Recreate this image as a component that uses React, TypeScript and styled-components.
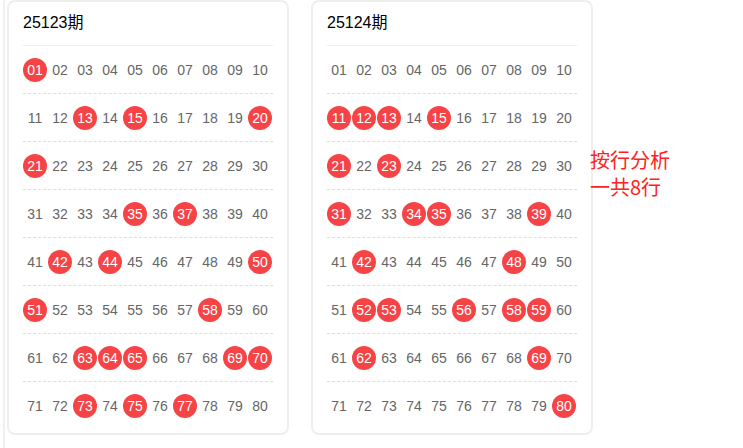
import * as React from 'react';
import styled, { createGlobalStyle } from 'styled-components';

const GlobalStyle = createGlobalStyle`
    html, body {
        margin: 0;
        padding: 0;
        background: #fff;
        font-family: "Liberation Sans", Arial, "Noto Sans CJK SC", sans-serif;
    }
`;

interface IIssue
{
    title : string;
    hits : number[];
}

const issues : IIssue[] = [
    {
        title: '25123期',
        hits: [1, 13, 15, 20, 21, 35, 37, 42, 44, 50, 51, 58, 63, 64, 65, 69, 70, 73, 75, 77],
    },
    {
        title: '25124期',
        hits: [11, 12, 13, 15, 21, 23, 31, 34, 35, 39, 42, 48, 52, 53, 56, 58, 59, 62, 69, 80],
    },
];

const Page = styled.div`
    display: flex;
    align-items: flex-start;
    gap: 22px;
    height: 448px;
    box-sizing: border-box;
    margin-left: 3px;
    padding-left: 2px;
    border-left: 2px solid #f0f0f0;
`;

const Card = styled.div`
    width: 282px;
    box-sizing: border-box;
    border: 2px solid #eeeeee;
    border-radius: 8px;
    padding: 0 14px 3px 14px;
    background: #fff;
`;

const Title = styled.div`
    height: 43px;
    line-height: 42px;
    font-size: 16px;
    color: #000;
    border-bottom: 1px solid #eeeeee;
`;

const Row = styled.div`
    display: flex;
    height: 48px;
    align-items: center;
    border-bottom: 1px dashed #dddddd;
    box-sizing: border-box;

    &:last-child {
        border-bottom: none;
    }
`;

const Ball = styled.div<{ $hit : boolean }>`
    width: 24px;
    height: 24px;
    margin-right: 1px;
    border-radius: 50%;
    display: flex;
    align-items: center;
    justify-content: center;
    font-size: 14px;
    color: ${p => p.$hit ? '#fff' : '#666'};
    background: ${p => p.$hit ? '#f64346' : 'transparent'};
`;

const Note = styled.div`
    margin-top: 146px;
    margin-left: -25px;
    font-size: 20px;
    line-height: 27px;
    color: #ff2222;
    font-family: "Noto Sans CJK SC", "Liberation Sans", sans-serif;
`;

const pad = (n : number) => (n < 10 ? '0' + n : '' + n);

function IssueCard({ issue } : { issue : IIssue })
{
    const rows = Array.from({ length: 8 }, (_, r) => Array.from({ length: 10 }, (_, c) => r * 10 + c + 1));
    return (
        <Card>
            <Title>{issue.title}</Title>
            {rows.map((row, i) => (
                <Row key={i}>
                    {row.map(n => (
                        <Ball key={n} $hit={issue.hits.includes(n)}>{pad(n)}</Ball>
                    ))}
                </Row>
            ))}
        </Card>
    );
}

export default function App()
{
    return (
        <React.Fragment>
            <GlobalStyle />
            <Page>
                {issues.map(issue => <IssueCard key={issue.title} issue={issue} />)}
                <Note>
                    按行分析<br />
                    一共8行
                </Note>
            </Page>
        </React.Fragment>
    );
}
